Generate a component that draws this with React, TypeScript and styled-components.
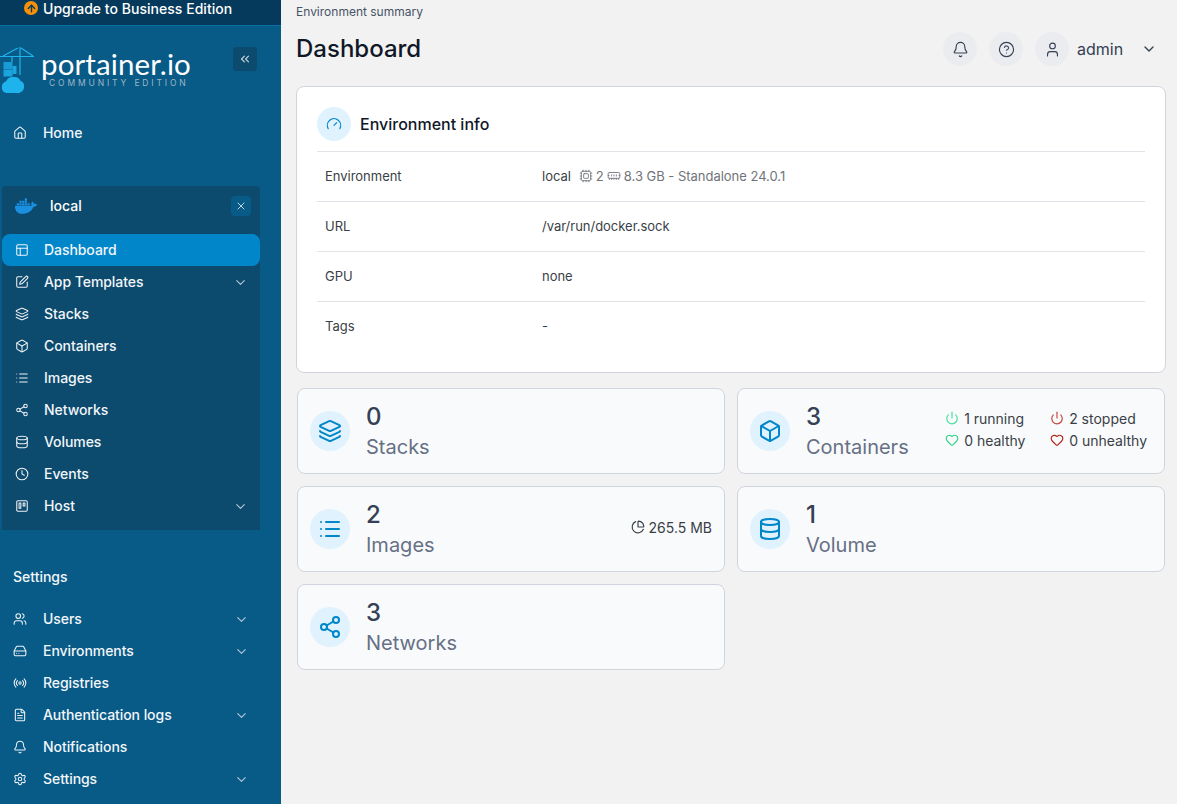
import React from "react";
import styled, { createGlobalStyle } from "styled-components";
import {
  Home, PanelsTopLeft, SquarePen, Layers, Box, List, Share2, Database, Clock, Trello, Users,
  HardDrive, Radio, FileText, Bell, Settings, ChevronDown, ChevronsLeft, X, ArrowUp, HelpCircle,
  User, Gauge, Cpu, MemoryStick, Power, Heart, ChartPie,
} from "lucide-react";
import { FaDocker } from "react-icons/fa";

const Global = createGlobalStyle`
  html, body { margin: 0; padding: 0; height: 100%; overflow: hidden; background: #f2f2f2; }
  body { font-family: Inter, "Noto Sans", sans-serif; }
  * { box-sizing: border-box; }
`;

const Shell = styled.div`
  display: flex;
  width: 1177px;
  height: 804px;
  overflow: hidden;
`;

const Sidebar = styled.aside`
  width: 281px;
  flex: none;
  background: #085a87;
  color: #fff;
  display: flex;
  flex-direction: column;
`;

const Upgrade = styled.div`
  height: 26px;
  background: #053a5c;
  border-bottom: 1px solid #0a6fa5;
  display: flex;
  align-items: flex-start;
  padding: 1px 0 0 24px;
  gap: 5px;
  font-size: 14px;
  font-weight: 500;
  line-height: 16px;
  letter-spacing: 0.03px;
`;

const UpgradeDot = styled.span`
  width: 14px;
  height: 14px;
  border-radius: 50%;
  background: #f79009;
  color: #053a5c;
  display: flex;
  align-items: center;
  justify-content: center;
`;

const LogoRow = styled.div`
  display: flex;
  justify-content: space-between;
  align-items: flex-start;
  margin-top: 21px;
  height: 46px;
  padding-right: 24px;
`;

const Logo = styled.div`
  display: flex;
  align-items: flex-start;
`;

const LogoText = styled.div`
  margin-left: 7px;
  margin-top: 4px;
  display: flex;
  flex-direction: column;
`;

const LogoName = styled.span`
  font-family: Lato, "Open Sans", sans-serif;
  font-size: 29.5px;
  line-height: 25px;
  letter-spacing: 0.1px;
`;

const LogoEdition = styled.span`
  margin-left: 8px;
  margin-top: 2px;
  font-size: 8.5px;
  line-height: 11px;
  letter-spacing: 2.85px;
  color: #9fb6c6;
  white-space: nowrap;
`;

const SquareButton = styled.span<{ $size: number; $bg: string }>`
  width: ${(p) => p.$size}px;
  height: ${(p) => p.$size}px;
  border-radius: 4px;
  background: ${(p) => p.$bg};
  color: #c5d3dd;
  display: flex;
  align-items: center;
  justify-content: center;
  flex: none;
`;

const Row = styled.div<{ $active?: boolean; $inset: number; $chevronRight: number }>`
  height: 32px;
  display: flex;
  align-items: center;
  padding: 0 ${(p) => p.$chevronRight}px 0 ${(p) => p.$inset}px;
  border-radius: ${(p) => (p.$active ? "8px" : "0")};
  background: ${(p) => (p.$active ? "#0086c9" : "transparent")};
  font-size: 14px;
  font-weight: 500;
  letter-spacing: -0.06px;
  color: #f2f6f9;
`;

const RowIcon = styled.span<{ $width: number }>`
  width: ${(p) => p.$width}px;
  flex: none;
  display: flex;
  align-items: center;
  color: #f0f4f7;
`;

const RowLabel = styled.span`
  flex: 1;
  white-space: nowrap;
  padding-bottom: 2px;
`;

const RowChevron = styled(ChevronDown)`
  color: #b9cad6;
`;

const HomeWrap = styled.div`
  margin-top: 24px;
`;

const EnvBlock = styled.div`
  margin: 37px 21px 0 2px;
  background: #0c4a6e;
  border-radius: 4px 4px 0 0;
  padding-bottom: 8px;
`;

const EnvHeader = styled.div`
  height: 48px;
  display: flex;
  align-items: center;
  padding: 0 9px 8px 13px;
  font-size: 14px;
  font-weight: 500;
`;

const EnvName = styled.span`
  flex: 1;
  margin-left: 13px;
  padding-bottom: 2px;
`;

const SettingsTitle = styled.div`
  margin: 37px 0 16px 13px;
  font-size: 14px;
  font-weight: 500;
  line-height: 20px;
  color: #f2f6f9;
`;

const Main = styled.main`
  flex: 1;
  min-width: 0;
  padding: 0 11px 0 15px;
  background: #f2f2f2;
  display: flex;
  flex-direction: column;
`;

const Crumb = styled.div`
  margin-top: 4px;
  font-size: 12px;
  line-height: 16px;
  color: #475467;
`;

const HeaderRow = styled.div`
  margin-top: 12px;
  height: 34px;
  display: flex;
  align-items: center;
  justify-content: space-between;
  padding-right: 9px;
`;

const Title = styled.h1`
  margin: 0;
  font-size: 24px;
  line-height: 34px;
  font-weight: 500;
  color: #101828;
`;

const Actions = styled.div`
  display: flex;
  align-items: center;
  gap: 12px;
`;

const RoundButton = styled.span`
  width: 34px;
  height: 34px;
  border-radius: 50%;
  background: #eaecf0;
  color: #344054;
  display: flex;
  align-items: center;
  justify-content: center;
`;

const UserMenu = styled.div`
  display: flex;
  align-items: center;
  font-size: 16px;
  color: #344054;
`;

const UserName = styled.span`
  margin: 0 8px 0 8px;
  width: 56px;
`;

const InfoCard = styled.section`
  margin-top: 20px;
  height: 287px;
  background: #fff;
  border: 1px solid #d0d5dd;
  border-radius: 8px;
  padding: 20px;
`;

const InfoHeader = styled.div`
  height: 45px;
  display: flex;
  align-items: flex-start;
  gap: 9px;
  border-bottom: 1px solid #dfe2e7;
`;

const InfoIcon = styled.span<{ $size: number }>`
  width: ${(p) => p.$size}px;
  height: ${(p) => p.$size}px;
  border-radius: 50%;
  background: #e0f2fe;
  color: #0086c9;
  display: flex;
  align-items: center;
  justify-content: center;
  flex: none;
`;

const InfoTitle = styled.h2`
  margin: 0;
  font-size: 16px;
  line-height: 34px;
  font-weight: 500;
  color: #101828;
`;

const InfoRow = styled.div<{ $last?: boolean }>`
  height: 50px;
  display: grid;
  grid-template-columns: 217px 1fr;
  align-items: center;
  padding: 0 0 2px 8px;
  font-size: 13px;
  letter-spacing: -0.02px;
  color: #3a3f47;
  border-bottom: ${(p) => (p.$last ? "none" : "1px solid #dfe2e7")};
`;

const InfoValue = styled.div`
  display: flex;
  align-items: center;
`;

const Meta = styled.span`
  display: inline-flex;
  align-items: center;
  gap: 3px;
  margin-left: 8px;
  font-size: 13px;
  color: #70747a;
`;

const Spec = styled.span`
  display: inline-flex;
  align-items: center;
  gap: 3px;
`;

const StatGrid = styled.div`
  margin: 15px 0 0 1px;
  width: 868px;
  display: grid;
  grid-template-columns: 428px 428px;
  grid-auto-rows: 86px;
  gap: 12px;
`;

const StatCard = styled.div`
  background: #f9fafb;
  border: 1px solid #d0d5dd;
  border-radius: 8px;
  display: flex;
  align-items: center;
  padding: 0 12px;
`;

const StatText = styled.div`
  margin-left: 16px;
  padding-top: 2px;
  display: flex;
  flex-direction: column;
`;

const StatNumber = styled.div`
  font-size: 24px;
  line-height: 30px;
  font-weight: 500;
  color: #344054;
`;

const StatLabel = styled.div`
  font-size: 20px;
  line-height: 30px;
  color: #667085;
`;

const StatExtra = styled.div`
  margin-left: auto;
  padding-bottom: 4px;
  display: flex;
  align-items: center;
  gap: 4px;
  font-size: 14px;
  color: #3a3f47;
`;

const StatusGrid = styled.div`
  margin-left: auto;
  margin-right: 5px;
  padding-bottom: 4px;
  display: grid;
  grid-template-columns: 105px auto;
  row-gap: 3px;
  font-size: 14px;
  line-height: 19px;
  color: #3a3f47;
`;

const Status = styled.span`
  display: flex;
  align-items: center;
  gap: 5px;
  white-space: nowrap;
`;

const Crane = () => (
  <svg width="34" height="46" viewBox="0 0 34 46" fill="none">
    <g stroke="#1fb3ee" strokeWidth="1.2">
      <path d="M0 9.5h34M20 0v28M18 1 3 9M21 1l12 8M12 10v5" />
    </g>
    <g fill="#1fb3ee">
      <rect x="3.5" y="15" width="9" height="7" opacity="0.75" />
      <rect x="12.5" y="19" width="4" height="8" opacity="0.85" />
      <rect x="3.5" y="22.5" width="9" height="7" opacity="0.85" />
      <path d="M7 46c-3 0-5.500-2.500-5-5.500-.5-3 1.500-5.500 4-6 1-3 4-5 7.500-4.500 3-.5 6 1 7 4 2.500.5 4 3 3.500 6 0 3.500-3 6-6 6-3 1-7 1-11 0z" />
    </g>
  </svg>
);

type Item = { icon: React.ElementType; label: string; chevron?: boolean; active?: boolean };

const envItems: Item[] = [
  { icon: PanelsTopLeft, label: "Dashboard", active: true },
  { icon: SquarePen, label: "App Templates", chevron: true },
  { icon: Layers, label: "Stacks" },
  { icon: Box, label: "Containers" },
  { icon: List, label: "Images" },
  { icon: Share2, label: "Networks" },
  { icon: Database, label: "Volumes" },
  { icon: Clock, label: "Events" },
  { icon: Trello, label: "Host", chevron: true },
];

const settingItems: Item[] = [
  { icon: Users, label: "Users", chevron: true },
  { icon: HardDrive, label: "Environments", chevron: true },
  { icon: Radio, label: "Registries" },
  { icon: FileText, label: "Authentication logs", chevron: true },
  { icon: Bell, label: "Notifications" },
  { icon: Settings, label: "Settings", chevron: true },
];

const NavRow = ({ item, inset, iconWidth, right }: { item: Item; inset: number; iconWidth: number; right: number }) => {
  const Icon = item.icon;
  return (
    <Row $active={item.active} $inset={inset} $chevronRight={right}>
      <RowIcon $width={iconWidth}>
        <Icon size={14} strokeWidth={1.8} />
      </RowIcon>
      <RowLabel>{item.label}</RowLabel>
      {item.chevron && <RowChevron size={15} strokeWidth={1.8} />}
    </Row>
  );
};

const infoRows = [
  { label: "Environment", value: "local", meta: true },
  { label: "URL", value: "/var/run/docker.sock" },
  { label: "GPU", value: "none" },
  { label: "Tags", value: "-" },
];

export default function App() {
  return (
    <Shell>
      <Global />
      <Sidebar>
        <Upgrade>
          <UpgradeDot>
            <ArrowUp size={11} strokeWidth={3} />
          </UpgradeDot>
          Upgrade to Business Edition
        </Upgrade>
        <LogoRow>
          <Logo>
            <Crane />
            <LogoText>
              <LogoName>portainer.io</LogoName>
              <LogoEdition>COMMUNITY EDITION</LogoEdition>
            </LogoText>
          </Logo>
          <SquareButton $size={24} $bg="#0c4a6e">
            <ChevronsLeft size={14} />
          </SquareButton>
        </LogoRow>
        <HomeWrap>
          <NavRow item={{ icon: Home, label: "Home" }} inset={13} iconWidth={30} right={32} />
        </HomeWrap>
        <EnvBlock>
          <EnvHeader>
            <FaDocker size={22} color="#1a90e0" />
            <EnvName>local</EnvName>
            <SquareButton $size={20} $bg="#085a87">
              <X size={12} />
            </SquareButton>
          </EnvHeader>
          {envItems.map((item) => (
            <NavRow key={item.label} item={item} inset={13} iconWidth={29} right={12} />
          ))}
        </EnvBlock>
        <SettingsTitle>Settings</SettingsTitle>
        {settingItems.map((item) => (
          <NavRow key={item.label} item={item} inset={13} iconWidth={30} right={32} />
        ))}
      </Sidebar>
      <Main>
        <Crumb>Environment summary</Crumb>
        <HeaderRow>
          <Title>Dashboard</Title>
          <Actions>
            <RoundButton>
              <Bell size={17} strokeWidth={1.6} />
            </RoundButton>
            <RoundButton>
              <HelpCircle size={17} strokeWidth={1.6} />
            </RoundButton>
            <UserMenu>
              <RoundButton>
                <User size={17} strokeWidth={1.6} />
              </RoundButton>
              <UserName>admin</UserName>
              <ChevronDown size={16} />
            </UserMenu>
          </Actions>
        </HeaderRow>
        <InfoCard>
          <InfoHeader>
            <InfoIcon $size={34}>
              <Gauge size={16} strokeWidth={1.7} />
            </InfoIcon>
            <InfoTitle>Environment info</InfoTitle>
          </InfoHeader>
          {infoRows.map((row, i) => (
            <InfoRow key={row.label} $last={i === infoRows.length - 1}>
              <span>{row.label}</span>
              <InfoValue>
                {row.value}
                {row.meta && (
                  <Meta>
                    <Spec>
                      <Cpu size={14} strokeWidth={1.5} /> 2
                    </Spec>
                    <Spec>
                      <MemoryStick size={14} strokeWidth={1.5} /> 8.3 GB - Standalone 24.0.1
                    </Spec>
                  </Meta>
                )}
              </InfoValue>
            </InfoRow>
          ))}
        </InfoCard>
        <StatGrid>
          <StatCard>
            <InfoIcon $size={40}>
              <Layers size={24} strokeWidth={2} />
            </InfoIcon>
            <StatText>
              <StatNumber>0</StatNumber>
              <StatLabel>Stacks</StatLabel>
            </StatText>
          </StatCard>
          <StatCard>
            <InfoIcon $size={40}>
              <Box size={24} strokeWidth={2} />
            </InfoIcon>
            <StatText>
              <StatNumber>3</StatNumber>
              <StatLabel>Containers</StatLabel>
            </StatText>
            <StatusGrid>
              <Status>
                <Power size={14} color="#4ade9a" /> 1 running
              </Status>
              <Status>
                <Power size={14} color="#c4443c" /> 2 stopped
              </Status>
              <Status>
                <Heart size={14} color="#34d58c" /> 0 healthy
              </Status>
              <Status>
                <Heart size={14} color="#b42318" /> 0 unhealthy
              </Status>
            </StatusGrid>
          </StatCard>
          <StatCard>
            <InfoIcon $size={40}>
              <List size={24} strokeWidth={2} />
            </InfoIcon>
            <StatText>
              <StatNumber>2</StatNumber>
              <StatLabel>Images</StatLabel>
            </StatText>
            <StatExtra>
              <ChartPie size={14} /> 265.5 MB
            </StatExtra>
          </StatCard>
          <StatCard>
            <InfoIcon $size={40}>
              <Database size={24} strokeWidth={2} />
            </InfoIcon>
            <StatText>
              <StatNumber>1</StatNumber>
              <StatLabel>Volume</StatLabel>
            </StatText>
          </StatCard>
          <StatCard>
            <InfoIcon $size={40}>
              <Share2 size={24} strokeWidth={2} />
            </InfoIcon>
            <StatText>
              <StatNumber>3</StatNumber>
              <StatLabel>Networks</StatLabel>
            </StatText>
          </StatCard>
        </StatGrid>
      </Main>
    </Shell>
  );
}
